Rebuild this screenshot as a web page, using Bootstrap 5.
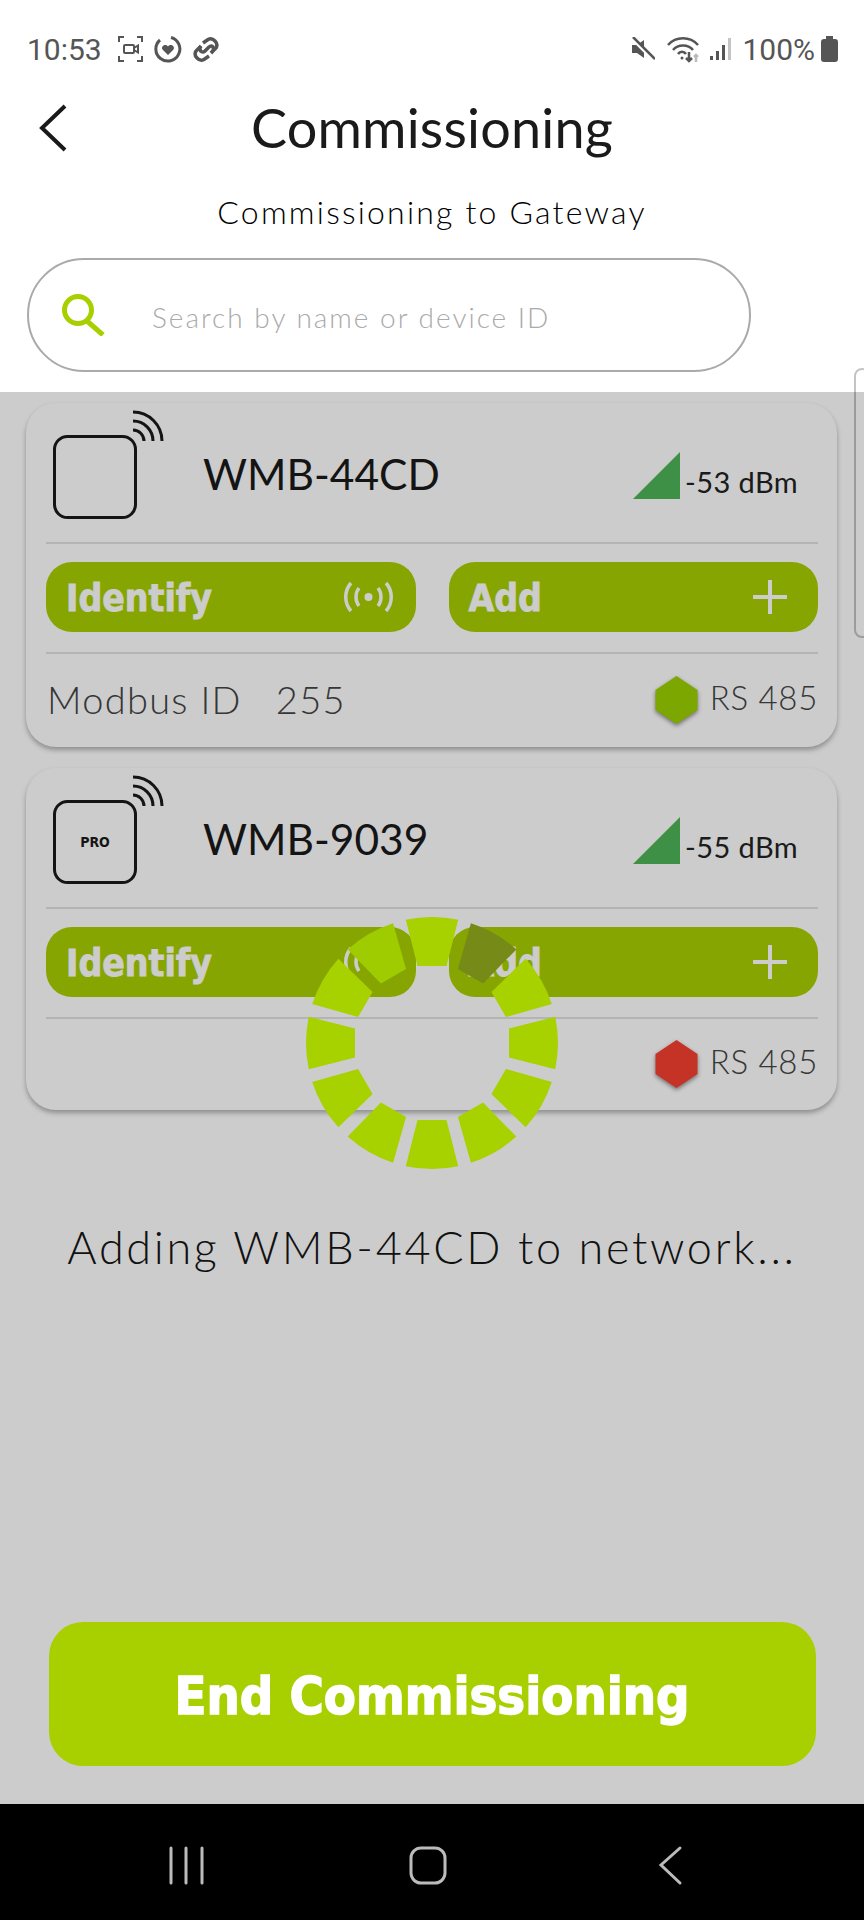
<!DOCTYPE html>
<html lang="en">
<head>
  <meta charset="UTF-8" />
  <title>Commissioning</title>
  <link href="https://cdn.jsdelivr.net/npm/bootstrap@5.3.3/dist/css/bootstrap.min.css" rel="stylesheet" />
  <style>
    body { font-family: Lato, "Liberation Sans", sans-serif; color: #1a1a1a; background: #fff; overflow: hidden; }
    .app-shell { width: 864px; height: 1920px; }
    .top-area { height: 392px; flex: none; }
    .status-row { height: 98px; padding: 0 26px 0 27px; font-family: Roboto, sans-serif; font-size: 30px; color: #555; }
    .status-row svg { display: block; }
    .title-row { display: grid; grid-template-columns: 1fr auto 1fr; height: 60px; align-items: center; }
    .title-row svg { margin-left: 38px; }
    .page-title { font-size: 54px; line-height: 60px; margin: 0; font-weight: 400; letter-spacing: .2px; color: #1a1a1a; }
    .page-sub { font-size: 32px; line-height: 40px; margin-top: 34px; padding-bottom: 1px; letter-spacing: 2.200px; font-weight: 300; color: #000; }
    .search-pill { height: 114px; width: 724px; margin: 25px 0 0 27px; padding-left: 33px; border: 2px solid #aaa; }
    .search-pill input { border: 0; outline: 0; flex: 1; min-width: 0; margin-left: 44px; padding-top: 4px; font-size: 28px; font-weight: 300; letter-spacing: 2px; background: transparent; }
    .search-pill input::placeholder { color: #aaa; opacity: 1; }
    .list-area { flex: 1; padding: 11px 27px 0 26px; }
    .scroll-edge { position: absolute; right: -6px; top: -24px; width: 16px; height: 270px; border: 2px solid #c4c4c4; border-radius: 10px; }
    .dev-card { height: 344px; padding: 0 19px 0 20px; border: 0; border-radius: 30px; margin-bottom: 21px; box-shadow: 0 3px 5px rgba(0, 0, 0, .3); }
    .dev-card.short-card { height: 342px; }
    .short-card .dev-foot { height: 89px; }
    .dev-head { height: 139px; padding: 7px 20px 0 7px; }
    .dev-name { font-size: 42.500px; line-height: 52px; margin: 38px 0 0 38px; }
    .dev-signal { margin-top: 42px; font-size: 29px; gap: 5px; }
    .dev-signal span { line-height: 47px; padding-top: 6px; color: #222; letter-spacing: .4px; }
    .dev-line { height: 2px; margin: 0; background: #e2e2e2; opacity: 1; border: 0; }
    .dev-btns { gap: 33px; padding: 18px 0 20px; }
    .act-btn { flex: 1; height: 70px; padding: 3px 31px 0 20px; border: 0; border-radius: 26px; background: #a9cf00; color: #fff; font-family: "DejaVu Sans", sans-serif; font-weight: 700; font-stretch: condensed; font-size: 37px; -webkit-text-stroke: .8px #fff; }
    .act-btn .wave-ic { margin-right: -8px; }
    .act-btn svg { margin-top: -3px; }
    .dev-foot { height: 91px; padding-left: 1px; color: #444; font-size: 38px; font-weight: 300; letter-spacing: 1.300px; }
    .dev-foot .dev-num { margin-left: 34px; }
    .dev-foot .rs-label { font-size: 33px; margin-left: 12px; padding: 0 0 4px 0; letter-spacing: .7px; }
    .hex-pin { filter: drop-shadow(0 2px 2px rgba(0, 0, 0, .45)); }
    .pro-mark { font-family: "DejaVu Sans", sans-serif; font-weight: 700; font-stretch: condensed; font-size: 14px; }
    .busy-layer { position: absolute; inset: 0; background: rgba(0, 0, 0, .2); padding-top: 525px; }
    .busy-spin { margin-top: -2px; }
    .busy-text { font-size: 45px; line-height: 56px; margin-top: 48px; letter-spacing: 2.650px; font-weight: 300; color: #111; }
    .end-btn { width: 767px; height: 144px; margin: auto 0 38px; padding-top: 10px; border: 0; border-radius: 34px; background: #a8d000; color: #fff; font-family: "DejaVu Sans", sans-serif; font-weight: 700; font-stretch: condensed; font-size: 52px; -webkit-text-stroke: 1.4px #fff; }
    .end-btn:hover, .act-btn:hover { color: #fff; }
    .nav-strip { height: 116px; flex: none; background: #000; }
    .st-gap { margin-left: 11px; }
    .st-wifi { margin-left: 12px; }
    .st-bars { margin-left: 9px; }
    .st-batt { margin-left: 6px; }
  </style>
</head>
<body>
  <div class="app-shell d-flex flex-column">
    <div class="top-area">
      <div class="status-row d-flex align-items-center">
        <span>10:53</span>
        <svg class="ms-3" width="25" height="26" viewBox="0 0 25 26" fill="none" stroke="#555" stroke-width="2">
          <path d="M1 6V1H6M19 1H24V6M1 20V25H6M19 25H24V20" />
          <rect x="6" y="9" width="10" height="8" rx="1" />
          <path d="M16 12L20 9.500V16.500L16 14" />
        </svg>
        <svg class="st-gap" width="28" height="28" viewBox="0 0 28 28" fill="none" stroke="#555" stroke-width="3">
          <path d="M17 2.500A12 12 0 1 1 6 5" />
          <path d="M14 20L8.500 14.500C6.500 11 11.500 8 14 11.500C16.500 8 21.500 11 19.500 14.500Z" fill="#555" stroke="none" />
        </svg>
        <svg class="st-gap" width="26" height="25" viewBox="0 0 26 25" fill="none" stroke="#555" stroke-width="3.500">
          <path d="M10 6L15 2.500C20 0 26 6 23 11L18 16" />
          <path d="M16 19L11 22.500C6 25 0 19 3 14L8 9" />
          <path d="M8 9C5 13 9 17 12 14L16 10C19 7 23 11 18 16" />
        </svg>
        <svg class="ms-auto" width="24" height="24" viewBox="0 0 24 24">
          <path d="M1 8H6L13 3V21L6 16H1Z" fill="#555" />
          <path d="M1 1L23 23" stroke="#fff" stroke-width="4" />
          <path d="M2 0L24 22" stroke="#555" stroke-width="2.500" />
        </svg>
        <svg class="st-wifi" width="32" height="27" viewBox="0 0 32 27" fill="none" stroke="#555" stroke-width="2.500">
          <path d="M1 9C9 0 23 0 31 9" />
          <path d="M6 14C11 8 21 8 26 14" />
          <path d="M11 18C13 15 17 15 19 18" />
          <circle cx="15" cy="22" r="1.500" fill="#555" stroke="none" />
          <path d="M22 16V25M19 22L22 25L25 22" />
          <path d="M29 26V19M27 21L29 19L31 21" stroke="#bbb" />
        </svg>
        <svg class="st-bars" width="26" height="24" viewBox="0 0 26 24">
          <rect x="2" y="19" width="3" height="4" fill="#555" />
          <rect x="8" y="14" width="3" height="9" fill="#555" />
          <rect x="14" y="8" width="3" height="15" fill="#555" />
          <rect x="20" y="1" width="3" height="22" fill="#c4c4c4" />
        </svg>
        <span class="ms-2">100%</span>
        <svg class="st-batt" width="17" height="26" viewBox="0 0 17 26">
          <path d="M5 0H12V3H14A3 3 0 0 1 17 6V23A3 3 0 0 1 14 26H3A3 3 0 0 1 0 23V6A3 3 0 0 1 3 3H5Z" fill="#555" />
        </svg>
      </div>

      <div class="title-row">
        <svg width="30" height="48" viewBox="0 0 30 48" fill="none" stroke="#1a1a1a" stroke-width="4">
          <path d="M27 2L4 24L27 46" />
        </svg>
        <h1 class="page-title">Commissioning</h1>
      </div>
      <div class="page-sub text-center">Commissioning to Gateway</div>

      <div class="search-pill d-flex align-items-center rounded-pill">
        <svg width="44" height="42" viewBox="0 0 44 42" fill="none" stroke="#a8d000" stroke-width="5">
          <circle cx="16" cy="16" r="13.500" />
          <path d="M25 27L41 41" />
        </svg>
        <input type="text" placeholder="Search by name or device ID" />
      </div>
    </div>

    <div class="list-area flex-grow-1 position-relative">
      <div class="scroll-edge"></div>

      <div class="card dev-card">
        <div class="dev-head d-flex align-items-start">
          <svg width="112" height="110" viewBox="0 0 112 110" fill="none" stroke="#1a1a1a">
            <rect x="1.500" y="26.500" width="81" height="81" rx="13" stroke-width="3" />
            <path d="M80 20A11 11 0 0 1 91 31M80 11A20 20 0 0 1 100 31M80 2A29 29 0 0 1 109 31" stroke-width="3" />
          </svg>
          <div class="dev-name">WMB-44CD</div>
          <div class="dev-signal d-flex ms-auto">
            <svg width="47" height="47" viewBox="0 0 47 47"><path d="M47 0V47H0Z" fill="#4fb559" /></svg>
            <span>-53 dBm</span>
          </div>
        </div>
        <hr class="dev-line" />
        <div class="dev-btns d-flex">
          <button class="btn act-btn d-flex align-items-center justify-content-between" type="button">
            Identify
            <svg class="wave-ic" width="49" height="32" viewBox="0 0 49 32" fill="none" stroke="#fff" stroke-width="3.500">
              <circle cx="24.500" cy="16" r="4" fill="#fff" stroke="none" />
              <path d="M15 7C11 12 11 20 15 25M34 7C38 12 38 20 34 25M7 2C0 10 0 22 7 30M42 2C49 10 49 22 42 30" />
            </svg>
          </button>
          <button class="btn act-btn d-flex align-items-center justify-content-between" type="button">
            Add
            <svg width="34" height="34" viewBox="0 0 34 34" stroke="#fff" stroke-width="4"><path d="M17 0V34M0 17H34" /></svg>
          </button>
        </div>
        <hr class="dev-line" />
        <div class="dev-foot d-flex align-items-center">
          <span>Modbus ID</span>
          <span class="dev-num">255</span>
          <svg class="hex-pin ms-auto" width="43" height="48" viewBox="0 0 42 48"><path d="M21 0L42 14V34L21 48L0 34V14Z" fill="#9cd000" /></svg>
          <span class="rs-label">RS 485</span>
        </div>
      </div>

      <div class="card dev-card short-card">
        <div class="dev-head d-flex align-items-start">
          <svg width="112" height="110" viewBox="0 0 112 110" fill="none" stroke="#1a1a1a">
            <rect x="1.500" y="26.500" width="81" height="81" rx="13" stroke-width="3" />
            <path d="M80 20A11 11 0 0 1 91 31M80 11A20 20 0 0 1 100 31M80 2A29 29 0 0 1 109 31" stroke-width="3" />
            <text class="pro-mark" x="42" y="72" text-anchor="middle" fill="#1a1a1a" stroke="none">PRO</text>
          </svg>
          <div class="dev-name">WMB-9039</div>
          <div class="dev-signal d-flex ms-auto">
            <svg width="47" height="47" viewBox="0 0 47 47"><path d="M47 0V47H0Z" fill="#4fb559" /></svg>
            <span>-55 dBm</span>
          </div>
        </div>
        <hr class="dev-line" />
        <div class="dev-btns d-flex">
          <button class="btn act-btn d-flex align-items-center justify-content-between" type="button">
            Identify
            <svg class="wave-ic" width="49" height="32" viewBox="0 0 49 32" fill="none" stroke="#fff" stroke-width="3.500">
              <circle cx="24.500" cy="16" r="4" fill="#fff" stroke="none" />
              <path d="M15 7C11 12 11 20 15 25M34 7C38 12 38 20 34 25M7 2C0 10 0 22 7 30M42 2C49 10 49 22 42 30" />
            </svg>
          </button>
          <button class="btn act-btn d-flex align-items-center justify-content-between" type="button">
            Add
            <svg width="34" height="34" viewBox="0 0 34 34" stroke="#fff" stroke-width="4"><path d="M17 0V34M0 17H34" /></svg>
          </button>
        </div>
        <hr class="dev-line" />
        <div class="dev-foot d-flex align-items-center">
          <svg class="hex-pin ms-auto" width="43" height="48" viewBox="0 0 42 48"><path d="M21 0L42 14V34L21 48L0 34V14Z" fill="#f5402f" /></svg>
          <span class="rs-label">RS 485</span>
        </div>
      </div>

      <!-- busy overlay, everything under it gets dimmed -->
      <div class="busy-layer d-flex flex-column align-items-center">
        <svg class="busy-spin" width="256" height="256" viewBox="-128 -128 256 256">
          <defs><path id="wedge" d="M-26.200-123.200A126 126 0 0 1 26.200-123.200L14.500-77H-14.500Z" /></defs>
          <g fill="#a8d100">
            <use href="#wedge" />
            <use href="#wedge" transform="rotate(30)" fill="#758a17" />
            <use href="#wedge" transform="rotate(60)" />
            <use href="#wedge" transform="rotate(90)" />
            <use href="#wedge" transform="rotate(120)" />
            <use href="#wedge" transform="rotate(150)" />
            <use href="#wedge" transform="rotate(180)" />
            <use href="#wedge" transform="rotate(210)" />
            <use href="#wedge" transform="rotate(240)" />
            <use href="#wedge" transform="rotate(270)" />
            <use href="#wedge" transform="rotate(300)" />
            <use href="#wedge" transform="rotate(330)" fill="#9fcc00" />
          </g>
        </svg>
        <div class="busy-text">Adding WMB-44CD to network...</div>
        <button class="btn end-btn" type="button">End Commissioning</button>
      </div>
    </div>

    <div class="nav-strip d-flex align-items-center">
      <svg width="864" height="116" viewBox="0 0 864 116" fill="none" stroke="#bbb" stroke-width="3" stroke-linecap="round">
        <path d="M171 44V79M186 44V79M202 44V79" />
        <rect x="411" y="44" width="34" height="35" rx="10" />
        <path d="M680 44L661 61L680 79" />
      </svg>
    </div>
  </div>

  <script src="https://cdn.jsdelivr.net/npm/bootstrap@5.3.3/dist/js/bootstrap.bundle.min.js"></script>
</body>
</html>
